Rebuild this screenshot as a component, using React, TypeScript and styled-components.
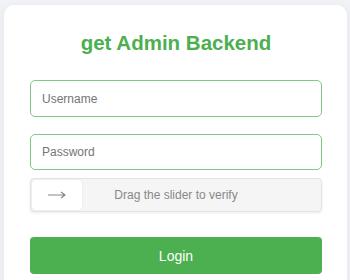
import React from "react";
import styled, { createGlobalStyle } from "styled-components";

const Global = createGlobalStyle`
  html, body { margin: 0; padding: 0; background: #f0f2f5; }
  body { font-family: "Liberation Sans", Arial, sans-serif; }
  * { box-sizing: border-box; }
`;

const Page = styled.div`
  padding: 5px 3px 0 4px;
  height: 280px;
  overflow: hidden;
`;

const Card = styled.div`
  background: #ffffff;
  border-radius: 10px;
  padding: 28px 25px 40px 26px;
  box-shadow: 0 2px 8px rgba(0, 0, 0, 0.06);
  display: flex;
  flex-direction: column;
`;

const Title = styled.h2`
  margin: 0 0 27px 0;
  text-align: center;
  color: #4caf50;
  font-size: 20.5px;
  font-weight: bold;
  line-height: 20px;
`;

const Input = styled.input<{ $mb: number; $h: number }>`
  height: ${(p) => p.$h}px;
  width: 100%;
  border: 1px solid #81c784;
  border-radius: 5px;
  padding: 0 11px;
  font-family: "Liberation Sans", Arial, sans-serif;
  font-size: 12px;
  color: #333;
  outline: none;
  margin-bottom: ${(p) => p.$mb}px;
  &::placeholder { color: #757575; }
`;

const Slider = styled.div`
  position: relative;
  height: 34px;
  background: #f5f5f5;
  border: 1px solid #e4e4e4;
  border-radius: 4px;
  box-shadow: 0 1px 3px rgba(0, 0, 0, 0.08);
  display: flex;
  align-items: center;
  justify-content: center;
  margin-bottom: 25px;
`;

const Handle = styled.div`
  position: absolute;
  left: 1px;
  top: 1px;
  bottom: 1px;
  width: 50px;
  background: #fff;
  border-radius: 4px;
  box-shadow: 0 0 2px rgba(0, 0, 0, 0.1);
  display: flex;
  align-items: center;
  justify-content: center;
  color: #777;
`;

const SliderText = styled.span`
  font-size: 12px;
  color: #888;
`;

const Button = styled.button`
  height: 37px;
  width: 100%;
  border: none;
  border-radius: 4px;
  background: #4caf50;
  color: #fff;
  font-family: "Liberation Sans", Arial, sans-serif;
  font-size: 14px;
`;

export default function App() {
  return (
    <>
      <Global />
      <Page>
        <Card>
          <Title>get Admin Backend</Title>
          <Input $mb={17} $h={37} placeholder="Username" />
          <Input $mb={8} $h={36} placeholder="Password" type="password" />
          <Slider>
            <Handle>
              <svg width="20" height="10" viewBox="0 0 20 10">
                <path d="M1 5 H18 M14 2 L18 5 L14 8" stroke="#888" strokeWidth="1.2" fill="none" />
              </svg>
            </Handle>
            <SliderText>Drag the slider to verify</SliderText>
          </Slider>
          <Button>Login</Button>
        </Card>
      </Page>
    </>
  );
}
